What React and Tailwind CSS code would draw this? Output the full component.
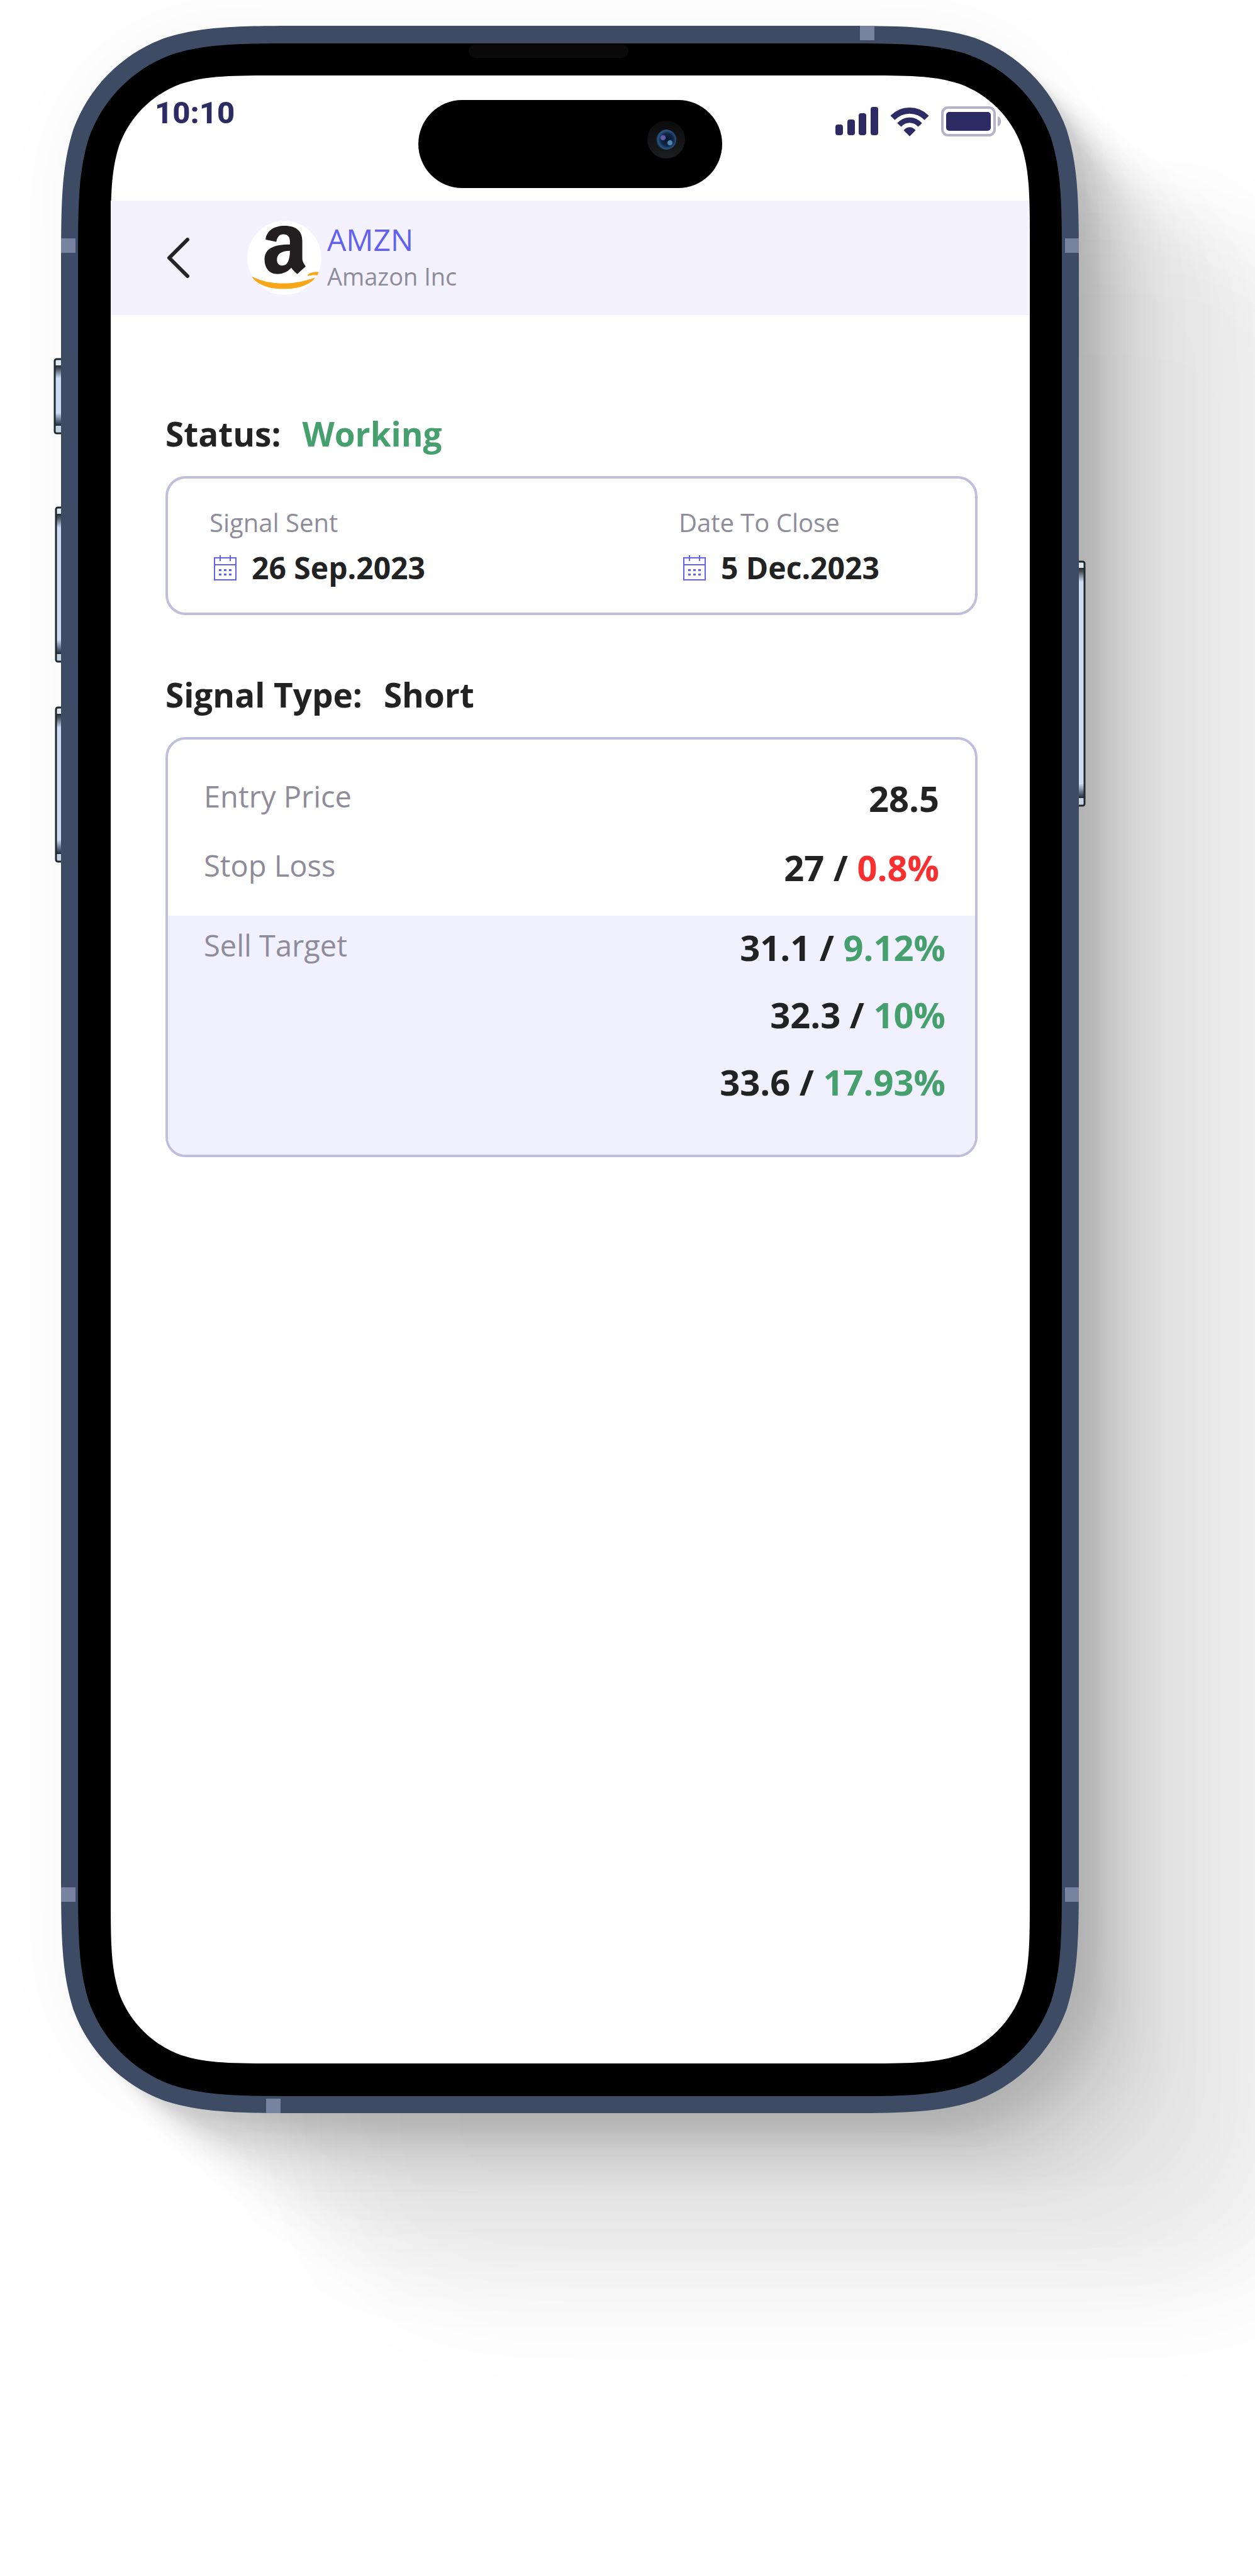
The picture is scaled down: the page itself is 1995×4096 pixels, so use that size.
import React from "react";

/* Rounded rectangle with continuous (smoothed) corners. */
function smoothRect(x, y, w, h, r) {
  const k = [1.52866, 1.08849, 0.86841, 0.63149, 0.37282, 0.16906, 0.07491].map((v) => v * r);
  const [a, b, c, d, e, f, g] = k;
  const R = x + w;
  const B = y + h;
  return [
    `M${x + a} ${y}`,
    `L${R - a} ${y}`,
    `C${R - b} ${y} ${R - c} ${y} ${R - d} ${y + g}`,
    `C${R - e} ${y + f} ${R - f} ${y + e} ${R - g} ${y + d}`,
    `C${R} ${y + c} ${R} ${y + b} ${R} ${y + a}`,
    `L${R} ${B - a}`,
    `C${R} ${B - b} ${R} ${B - c} ${R - g} ${B - d}`,
    `C${R - f} ${B - e} ${R - e} ${B - f} ${R - d} ${B - g}`,
    `C${R - c} ${B} ${R - b} ${B} ${R - a} ${B}`,
    `L${x + a} ${B}`,
    `C${x + b} ${B} ${x + c} ${B} ${x + d} ${B - g}`,
    `C${x + e} ${B - f} ${x + f} ${B - e} ${x + g} ${B - d}`,
    `C${x} ${B - c} ${x} ${B - b} ${x} ${B - a}`,
    `L${x} ${y + a}`,
    `C${x} ${y + b} ${x} ${y + c} ${x + g} ${y + d}`,
    `C${x + f} ${y + e} ${x + e} ${y + f} ${x + d} ${y + g}`,
    `C${x + c} ${y} ${x + b} ${y} ${x + a} ${y}Z`,
  ].join(" ");
}

function SideButton({ x, y, h }) {
  const cap = Math.min(22, h / 6);
  return (
    <g>
      <rect x={x + 1} y={y + 1} width="40" height={h - 2} rx="3" fill="#cddbf4" />
      <rect x={x + 1} y={y + 3} width="40" height="10" fill="#dfe6ee" />
      <rect x={x + 1} y={y + 11} width="40" height={cap} fill="url(#capTop)" />
      <rect x={x + 1} y={y + h - 13 - cap} width="40" height={cap} fill="url(#capBottom)" />
      <rect x={x + 1} y={y + h - 13} width="40" height="10" fill="#c8d3e2" />
      <rect x={x + 1} y={y + 1} width="40" height={h - 2} rx="3" fill="none" stroke="#1f292e" strokeWidth="3" />
    </g>
  );
}

function PhoneFrame() {
  return (
    <svg aria-hidden="true" viewBox="0 0 1618 3319" preserveAspectRatio="none" className="absolute inset-0 h-full w-full overflow-visible">
      <defs>
        <linearGradient id="capTop" x1="0" y1="0" x2="0" y2="1">
          <stop offset="0" stopColor="#252b33" />
          <stop offset="0.3" stopColor="#4d5561" />
          <stop offset="1" stopColor="#cddbf4" />
        </linearGradient>
        <linearGradient id="capBottom" x1="0" y1="0" x2="0" y2="1">
          <stop offset="0" stopColor="#c6d5ef" />
          <stop offset="0.7" stopColor="#4b5a6d" />
          <stop offset="1" stopColor="#1d2c3a" />
        </linearGradient>
      </defs>
      <SideButton x={-11} y={529} h={120} />
      <SideButton x={-9} y={765} h={247} />
      <SideButton x={-9} y={1083} h={247} />
      <SideButton x={1586} y={851} h={390} />
      <path d={smoothRect(0, 0, 1618, 3319, 261)} fill="#3d4c64" />
      <g fill="#7883a0">
        <rect x="0" y="338" width="23" height="23" />
        <rect x="0" y="2960" width="23" height="23" />
        <rect x="1596" y="338" width="22" height="23" />
        <rect x="1596" y="2960" width="22" height="23" />
        <rect x="1270" y="0" width="23" height="23" />
        <rect x="326" y="3296" width="23" height="23" />
      </g>
      <path d={smoothRect(27, 28, 1564, 3264, 236)} fill="#000" />
      <rect x="648" y="30" width="254" height="21" rx="10" fill="#0a0a0a" />
      <path d={smoothRect(79, 79, 1461, 3161, 177)} fill="#fff" />
    </svg>
  );
}

function CameraLens() {
  return (
    <svg aria-hidden="true" viewBox="0 0 60 60" className="size-[60px]">
      <defs>
        <linearGradient id="lensRing" x1="0" y1="0" x2="0" y2="1">
          <stop offset="0" stopColor="#0b0b0c" />
          <stop offset="1" stopColor="#1c1d1f" />
        </linearGradient>
        <radialGradient id="lensGlass" cx="0.55" cy="0.5" r="0.55">
          <stop offset="0" stopColor="#08142b" />
          <stop offset="0.55" stopColor="#0f2647" />
          <stop offset="0.85" stopColor="#2b5682" />
          <stop offset="1" stopColor="#111c2b" />
        </radialGradient>
      </defs>
      <circle cx="30" cy="30" r="30" fill="url(#lensRing)" />
      <circle cx="30" cy="30" r="16" fill="url(#lensGlass)" />
      <circle cx="25" cy="27" r="4" fill="#6459a8" />
      <circle cx="36" cy="35" r="4" fill="#4c86ad" />
    </svg>
  );
}

function SignalIcon() {
  return (
    <svg role="img" aria-label="Signal strength" viewBox="0 0 68 46" className="h-[46px] w-[68px]" fill="#2c2b63">
      <rect x="0" y="28" width="12" height="17" rx="4" />
      <rect x="19" y="20" width="12" height="25" rx="4" />
      <rect x="37" y="10" width="12" height="35" rx="4" />
      <rect x="56" y="0" width="12" height="45" rx="4" />
    </svg>
  );
}

function WifiIcon() {
  return (
    <svg role="img" aria-label="Wi-Fi" viewBox="335 68 190 144" className="h-[47px] w-[62px]">
      <g fill="none" stroke="#2c2b63">
        <path d="M347 121 C393 74 467 74 513 121" strokeWidth="30" />
        <path d="M379 156 C408 124 452 124 481 156" strokeWidth="26" />
      </g>
      <path d="M401 182 C417 162 443 162 459 182 L430 211Z" fill="#2c2b63" />
    </svg>
  );
}

function BatteryIcon() {
  return (
    <svg role="img" aria-label="Battery full" viewBox="0 0 96 48" className="h-[48px] w-[96px]">
      <rect x="2" y="2" width="83" height="44" rx="9" fill="none" stroke="#b4b3ca" strokeWidth="4" />
      <rect x="8" y="9" width="71" height="30" rx="5" fill="#2c2b63" />
      <path d="M90 16 C97 18 97 30 90 32Z" fill="#b4b3ca" />
    </svg>
  );
}

function AmazonLogo() {
  return (
    <svg role="img" aria-label="Amazon logo" viewBox="72 57 365 366" className="size-[118px] shrink-0">
      <circle cx="254.5" cy="240" r="182.5" fill="#fff" />
      <path
        fill="#231f20"
        fillRule="evenodd"
        d="M162 150 C167 105 205 82 257 82 C313 82 343 108 343 157 V240 C343 258 350 268 360 282 L318 320 C305 310 296 300 289 289 C270 310 245 320 220 320 C180 320 157 290 157 248 C157 195 200 174 282 174 V160 C282 138 272 124 250 124 C230 124 219 138 215 161Z M282 205 C240 205 218 222 218 249 C218 267 228 278 245 278 C270 278 282 250 282 205Z"
      />
      <g fill="#faa61a">
        <path d="M95 332 C140 354 190 366 250 366 C310 366 360 354 406 337 C400 354 370 373 330 384 C290 396 215 396 175 385 C130 371 102 350 95 332Z" />
        <path d="M368 325 C375 315 400 307 423 309 L418 326 C400 324 385 326 372 329Z" />
      </g>
    </svg>
  );
}

function CalendarIcon() {
  return (
    <svg aria-hidden="true" viewBox="0 0 36 40" className="h-10 w-9 shrink-0">
      <g fill="none" stroke="#6260ee" strokeWidth="2">
        <path d="M1 4H35V39H1Z" />
        <path d="M1 15H35" />
        <path d="M10 0V9M26 0V9" />
      </g>
      <g fill="#6260ee">
        <rect x="8" y="22" width="4" height="3" />
        <rect x="16" y="22" width="4" height="3" />
        <rect x="24" y="22" width="4" height="3" />
        <rect x="8" y="29" width="4" height="3" />
        <rect x="16" y="29" width="4" height="3" />
        <rect x="24" y="29" width="4" height="3" />
      </g>
    </svg>
  );
}

function StatusBar() {
  return (
    <div className="grid h-[199px] grid-cols-[1fr_auto_1fr] items-start pt-[39px] pr-[44px] pl-[44px]">
      <time className="pl-[26px] font-['Roboto',sans-serif] text-[49px] leading-[42px] font-extrabold text-[#2c2b63]">10:10</time>
      <div className="flex h-[140px] w-[483px] items-start justify-end rounded-full bg-black pt-[33px] pr-[59px]">
        <CameraLens />
      </div>
      <div className="mt-[10px] flex items-center justify-end gap-[19px]">
        <SignalIcon />
        <WifiIcon />
        <BatteryIcon />
      </div>
    </div>
  );
}

function StockHeader() {
  return (
    <header className="flex h-[182px] items-center bg-[#f4f2ff] pl-[87px]">
      <button type="button" aria-label="Back" className="mr-[90px] shrink-0">
        <svg viewBox="0 0 40 68" className="h-[68px] w-10" fill="none" stroke="#232323" strokeWidth="6" strokeLinecap="round" strokeLinejoin="round">
          <path d="M35 5 L6 34 L35 63" />
        </svg>
      </button>
      <AmazonLogo />
      <div className="ml-[9px]">
        <h1 className="text-[48px] leading-[58px] text-[#6260ee]">AMZN</h1>
        <p className="text-[38px] leading-[58px] text-[#8e8c9a]">Amazon Inc</p>
      </div>
    </header>
  );
}

function SectionTitle({ label, value, valueClass = "" }) {
  return (
    <h2 className="flex gap-[34px] text-[53px] leading-[72px] font-bold text-[#222222]">
      <span>{label}</span>
      <span className={valueClass}>{value}</span>
    </h2>
  );
}

function DateField({ label, value, iso }) {
  return (
    <div>
      <dt className="text-[40px] leading-[56px] text-[#8e8c9a]">{label}</dt>
      <dd className="mt-3 flex items-center gap-6 pl-[7px] text-[48px] leading-[64px] font-bold text-[#222222]">
        <CalendarIcon />
        <time dateTime={iso}>{value}</time>
      </dd>
    </div>
  );
}

function Price({ price, percent, tone }) {
  return (
    <span className="block whitespace-nowrap">
      {price}
      {percent && (
        <>
          {" / "}
          <span className={tone}>{percent}</span>
        </>
      )}
    </span>
  );
}

const labelClass = "text-[47px] font-normal text-[#8e8c9a]";
const valueClass = "text-right text-[56px] font-bold text-[#222222]";
const green = "text-[#45a06e]";

export default function App() {
  return (
    <main className="min-h-screen overflow-hidden bg-white pt-[41px] pr-[280px] pb-[120px] pl-[97px] font-['Open_Sans',sans-serif]">
      <div className="relative aspect-[1618/3319] w-full">
        <div className="absolute inset-[6px] rounded-[256px] shadow-[0_0_120px_6px_rgba(0,0,0,0.04),14px_13px_8px_6px_rgba(0,0,0,0.025),30px_28px_16px_6px_rgba(0,0,0,0.035),50px_48px_26px_6px_rgba(0,0,0,0.04),74px_70px_36px_6px_rgba(0,0,0,0.04),102px_96px_50px_6px_rgba(0,0,0,0.035),136px_126px_60px_6px_rgba(0,0,0,0.025),180px_160px_74px_6px_rgba(0,0,0,0.018),240px_210px_90px_6px_rgba(0,0,0,0.02),330px_265px_120px_6px_rgba(0,0,0,0.04),430px_320px_170px_6px_rgba(0,0,0,0.04)]" />
        <PhoneFrame />
        <div className="relative px-[79px] pt-[79px]">
          <StatusBar />
          <StockHeader />
          <div className="pt-[153px] pr-[82px] pl-[87px]">
            <SectionTitle label="Status:" value="Working" valueClass={green} />
            <dl className="mt-[31px] grid grid-cols-[19fr_12fr] rounded-[32px] border-4 border-[#c0bedd] pt-[42px] pb-[39px] pl-[66px]">
              <DateField label="Signal Sent" value="26 Sep.2023" iso="2023-09-26" />
              <DateField label="Date To Close" value="5 Dec.2023" iso="2023-12-05" />
            </dl>

            <div className="mt-[91px]">
              <SectionTitle label="Signal Type:" value="Short" />
            </div>
            <dl className="mt-[31px] overflow-hidden rounded-[32px] border-4 border-[#c0bedd]">
              <div className="flex items-start justify-between pt-[38px] pr-[57px] pl-[57px]">
                <dt className={labelClass + " leading-[104px]"}>Entry Price</dt>
                <dd className={valueClass + " leading-[110px]"}>
                  <Price price="28.5" />
                </dd>
              </div>
              <div className="flex items-start justify-between pr-[57px] pb-[22px] pl-[57px]">
                <dt className={labelClass + " leading-[104px]"}>Stop Loss</dt>
                <dd className={valueClass + " leading-[110px]"}>
                  <Price price="27" percent="0.8%" tone="text-[#f93030]" />
                </dd>
              </div>
              <div className="flex items-start justify-between bg-[#f1f0ff] pr-[47px] pb-[65px] pl-[57px]">
                <dt className={labelClass + " leading-[94px]"}>Sell Target</dt>
                <dd className={valueClass + " flex flex-col gap-[6px] leading-[101px]"}>
                  <Price price="31.1" percent="9.12%" tone={green} />
                  <Price price="32.3" percent="10%" tone={green} />
                  <Price price="33.6" percent="17.93%" tone={green} />
                </dd>
              </div>
            </dl>
          </div>
        </div>
      </div>
    </main>
  );
}
